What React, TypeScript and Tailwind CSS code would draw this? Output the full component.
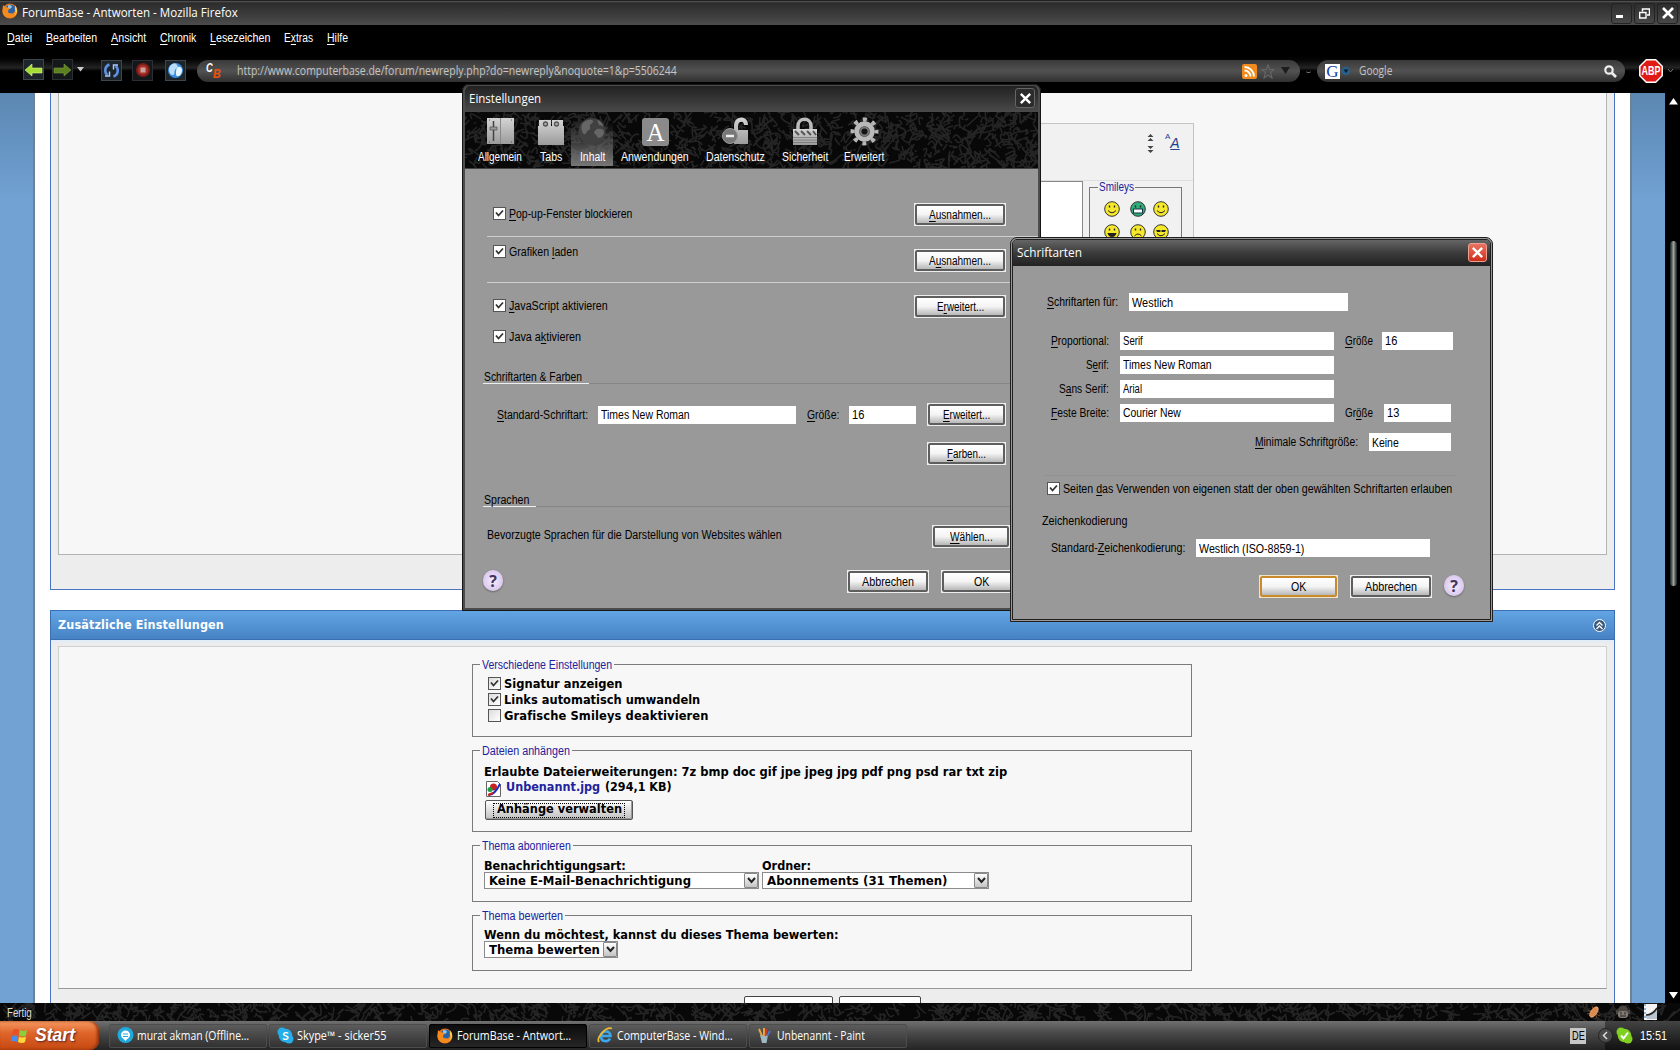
import { useLayoutEffect, useRef, useState } from "react";
import type { ReactNode } from "react";

// Text with an optional "_" in front of the access key. With w given, long
// text is condensed and short text is tracked out so it is exactly that wide.
function Txt({ children, w, className = "" }: { children: string; w?: number; className?: string }) {
  const ref = useRef<HTMLSpanElement>(null);
  const [natural, setNatural] = useState(0);
  const plain = children.replace("_", "");

  useLayoutEffect(() => {
    if (ref.current) setNatural(ref.current.offsetWidth);
  }, []);

  const key = children.indexOf("_");
  const condensed = w && natural > w;
  const spaced = w && natural && natural < w;

  return (
    <span className={`inline-block shrink-0 whitespace-pre ${className}`} style={{ width: w }}>
      <span
        ref={ref}
        className="inline-block origin-left"
        style={{
          transform: condensed ? `scaleX(${w / natural})` : undefined,
          letterSpacing: spaced ? (w - natural) / plain.length : undefined,
        }}
      >
        {key < 0 ? (
          children
        ) : (
          <>
            {children.slice(0, key)}
            <span className="underline underline-offset-2">{children[key + 1]}</span>
            {children.slice(key + 2)}
          </>
        )}
      </span>
    </span>
  );
}

function Texture({ seed, width, height }: { seed: number; width: number; height: number }) {
  let s = seed;
  const rnd = () => {
    s = (s * 16807) % 2147483647;
    return s / 2147483647;
  };
  const strokes = Array.from({ length: Math.round((width * height) / 38) }, () => {
    const x = rnd() * width;
    const y = rnd() * height;
    const d = () => Math.round((rnd() - 0.5) * 22);
    return `M${Math.round(x)} ${Math.round(y)}q${d()} ${d()} ${d()} ${d()}`;
  });
  return (
    <svg className="absolute inset-0 h-full w-full" viewBox={`0 0 ${width} ${height}`} preserveAspectRatio="none">
      <rect width={width} height={height} fill="#080808" />
      <path d={strokes.join("")} fill="none" stroke="#2c2c2c" strokeWidth="1.6" opacity=".8" />
    </svg>
  );
}

function Firefox({ size = 16 }: { size?: number }) {
  return (
    <svg width={size} height={size} viewBox="0 0 16 16" className="shrink-0">
      <circle cx="8" cy="8" r="7.500" fill="#e8731a" />
      <circle cx="8.600" cy="6.600" r="5.200" fill="#2a62a8" />
      <path d="M6 2.500c2-1 3.600 0 4 1.500l-2 2-2-.5z" fill="#8cc8ee" />
      <path d="M1 2l2 2 3 .5 2 1-2 2 .5 2.500 4 .5c2-.8 3-2.500 2.500-5.500l1.500 1c1 4-1.500 8.500-6 9C3 15.500 0 11.500.500 7z" fill="#f58a1d" />
      <path d="M13 2.500c3 3 2.500 8-.5 10.500 1.500-3 1.500-5 .3-7z" fill="#ffd34d" />
    </svg>
  );
}

function Cross({ size = 14 }: { size?: number }) {
  return (
    <svg width={size} height={size} viewBox="0 0 14 14">
      <path d="M2 2l10 10M12 2L2 12" stroke="#fff" strokeWidth="2.600" fill="none" />
    </svg>
  );
}

function TitleBar() {
  return (
    <div className="flex h-[25px] shrink-0 items-center border-t border-[#222] bg-linear-to-b from-[#5a5a5a] via-[#2c2c2c] via-8% to-[#4b4b4b] pl-[2px] font-['Open_Sans',sans-serif] text-[12px] font-medium text-white">
      <div className="-mt-[4px]">
        <Firefox />
      </div>
      <Txt w={216} className="ml-1">ForumBase - Antworten - Mozilla Firefox</Txt>
      <div className="mr-[2px] ml-auto flex gap-[2px]">
        <div className="flex h-[21px] w-[21px] items-end rounded-[3px] border border-[#222] pb-[5px] pl-1">
          <div className="h-[3px] w-[7px] bg-white" />
        </div>
        <div className="flex h-[21px] w-[21px] items-center justify-center rounded-[3px] border border-[#222]">
          <svg width="11" height="11" viewBox="0 0 11 11" fill="none" stroke="#fff">
            <path d="M3.500 3.500V1h7v6H8" strokeWidth="1.500" />
            <path d="M.7 4.500h6.300v5.500H.7z" strokeWidth="1.400" />
          </svg>
        </div>
        <div className="flex h-[21px] w-[21px] items-center justify-center rounded-[3px] border border-[#222]">
          <Cross />
        </div>
      </div>
    </div>
  );
}

const menu: [string, number, number][] = [
  ["_Datei", 7, 25],
  ["_Bearbeiten", 46, 51],
  ["_Ansicht", 111, 35],
  ["_Chronik", 160, 36],
  ["_Lesezeichen", 210, 60],
  ["E_xtras", 284, 29],
  ["_Hilfe", 327, 21],
];

function MenuBar() {
  return (
    <div className="flex h-[26px] shrink-0 items-center bg-black text-[12px] text-white">
      {menu.map(([label, x, w], i) => (
        <div
          key={label}
          className="shrink-0"
          style={{ marginLeft: i ? x - menu[i - 1][1] - menu[i - 1][2] : x, width: w }}
        >
          <Txt w={w}>{label}</Txt>
        </div>
      ))}
    </div>
  );
}

function NavButton({ children, dim }: { children: ReactNode; dim?: boolean }) {
  return (
    <div
      className={`flex h-[21px] w-[21px] shrink-0 items-center justify-center border ${dim ? "border-[#2b2f33] bg-[#15181a]" : "border-[#3d464c] bg-[#1d252b]"}`}
    >
      {children}
    </div>
  );
}

function NavBar() {
  const pill =
    "flex h-[22px] shrink-0 items-center rounded-full bg-linear-to-b from-[#3a3a3a] via-[#525252] to-[#303030]";
  return (
    <div className="flex h-[42px] shrink-0 items-center bg-linear-to-b from-black from-5% via-[#242424] via-40% to-black to-52% pb-[2px] font-['Open_Sans',sans-serif] text-[12px] text-[#c4c4c4]">
      <div className="mb-[3px] ml-[23px] flex items-center">
        <NavButton>
          <svg width="19" height="14" viewBox="0 0 19 14">
            <path d="M1 7l7-6v4h10v5H8v3z" fill="#a4dc35" stroke="#d9f78a" strokeWidth=".6" />
          </svg>
        </NavButton>
        <div className="ml-2">
          <NavButton dim>
            <svg width="19" height="14" viewBox="0 0 19 14">
              <path d="M18 7l-7-6v4H1v5h10v3z" fill="#5c8020" stroke="#7c9a3e" strokeWidth=".6" />
            </svg>
          </NavButton>
        </div>
        <svg width="7" height="5" className="ml-1">
          <path d="M0 0h7L3.500 4.500z" fill="#ccc" />
        </svg>
      </div>
      <div className="mb-[2px] ml-[17px] flex items-center">
        <NavButton>
          <svg width="17" height="17" viewBox="0 0 17 17" fill="none" stroke="#5e8fe0" strokeWidth="2.600">
            <path d="M6.500 2.500C1.500 4 1 10.500 4.500 13M10.500 14.500c5-1.500 5.500-8 2-10.500" />
            <path d="M2 14h4.500V9.500M15 3h-4.500v4.500" strokeWidth="1.500" stroke="#a9c8ff" />
          </svg>
        </NavButton>
        <div className="ml-[10px]">
          <NavButton dim>
            <svg width="16" height="16" viewBox="0 0 16 16">
              <circle cx="8" cy="8" r="7" fill="#7d1d18" />
              <circle cx="8" cy="8" r="5" fill="#a93228" />
              <rect x="5.500" y="5.500" width="5" height="5" fill="#c9a19d" />
            </svg>
          </NavButton>
        </div>
        <div className="ml-3">
          <NavButton>
            <svg width="17" height="17" viewBox="0 0 17 17">
              <circle cx="8.500" cy="8.500" r="7.500" fill="#3b8fe0" />
              <path d="M2 8C2 2 8 0 10 3s-1 3-2 5 0 5-2 5-4-2-4-5z" fill="#b9defa" />
              <path d="M11 5c4-1 5 4 3 7s-5 3-5 0 0-6 2-7z" fill="#e6f5ff" />
            </svg>
          </NavButton>
        </div>
      </div>
      <div className={`${pill} ml-[11px] w-[1103px]`}>
        <div className="ml-[9px] flex h-[18px] w-4 items-start font-['Liberation_Sans',sans-serif] text-[12px] leading-[12px] font-bold italic">
          <Txt w={7} className="text-white">C</Txt>
          <Txt w={8} className="mt-[6px] text-[#f3500d]">B</Txt>
        </div>
        <Txt w={440} className="ml-[15px]">
          http://www.computerbase.de/forum/newreply.php?do=newreply&noquote=1&p=5506244
        </Txt>
        <svg width="15" height="15" viewBox="0 0 15 15" className="ml-auto">
          <rect width="15" height="15" rx="2" fill="#f08c1e" />
          <circle cx="4" cy="11.500" r="1.500" fill="#fff" />
          <path d="M2.500 6.500a6 6 0 016 6M2.500 3a9.500 9.500 0 019.500 9.500" stroke="#fff" strokeWidth="1.800" fill="none" />
        </svg>
        <svg width="14" height="15" viewBox="0 0 14 15" className="ml-1">
          <path d="M7 1l1.700 4.500H13L9.600 8.500 11 14l-4-3-4 3 1.400-5.500L1 5.500h4.300z" fill="none" stroke="#666" strokeWidth="1.100" />
        </svg>
        <svg width="9" height="8" className="mr-[10px] ml-[6px]">
          <path d="M0 0h9L4.500 7z" fill="#1d1d1d" />
        </svg>
      </div>
      <div className="mx-[6px] h-1 w-[5px] rounded-full border-b border-[#777]" />
      <div className={`${pill} w-[308px]`}>
        <div className="ml-2 flex h-[15px] w-[15px] items-center justify-center bg-white font-['Liberation_Serif',serif] text-[17px] leading-none text-[#1a3da8]">
          G
        </div>
        <svg width="8" height="8" viewBox="0 0 8 8" className="ml-[2px]">
          <circle cx="4" cy="4" r="4" fill="#26628f" />
          <path d="M1.500 2.500h5L4 6z" fill="#0a1c2c" />
        </svg>
        <Txt w={33} className="ml-[9px]">Google</Txt>
        <svg width="13" height="13" viewBox="0 0 13 13" fill="none" stroke="#eee" className="mr-2 ml-auto">
          <circle cx="5" cy="5" r="3.700" strokeWidth="2.200" />
          <path d="M8 8l4 4" strokeWidth="2.600" />
        </svg>
      </div>
      <svg width="24" height="24" viewBox="0 0 24 24" className="ml-[14px] shrink-0">
        <path d="M7.300.800h9.400l6.500 6.500v9.400l-6.500 6.500H7.300L.800 16.700V7.300z" fill="#e01a14" stroke="#fff" strokeWidth="1.500" />
        <text x="12" y="16.200" fontSize="12" fontWeight="bold" fill="#fff" textAnchor="middle" textLength="19" lengthAdjust="spacingAndGlyphs" fontFamily="Liberation Sans">
          ABP
        </text>
      </svg>
      <svg width="5" height="4" className="ml-[5px]">
        <path d="M0 0l2.500 3L5 0" stroke="#777" fill="none" />
      </svg>
    </div>
  );
}

function Check({ on, web }: { on?: boolean; web?: boolean }) {
  return (
    <div
      className={`flex h-[13px] w-[13px] shrink-0 items-center justify-center border border-[#555] ${web ? "bg-linear-to-br from-[#dcdcdc] to-white" : "bg-white"}`}
    >
      {on && (
        <svg width="9" height="9" viewBox="0 0 9 9">
          <path d="M1 3.500l2.500 3L8 1.500" stroke="#333" strokeWidth="1.800" fill="none" />
        </svg>
      )}
    </div>
  );
}

function CheckRow({ label, w, on = true }: { label: string; w: number; on?: boolean }) {
  return (
    <div className="flex h-[13px] items-center">
      <Check on={on} />
      <Txt w={w} className="ml-[3px]">{label}</Txt>
    </div>
  );
}

function Button({ label, w, className = "", primary }: { label: string; w: number; className?: string; primary?: boolean }) {
  return (
    <div
      className={`flex h-[23px] shrink-0 border bg-white ${primary ? "border-[#efe3c8]" : "border-[#eee]"} ${className}`}
    >
      <div
        className={`flex flex-1 items-center justify-center rounded-[2px] border-2 bg-linear-to-b from-white via-[#f4f4f4] via-50% to-[#b8b8b8] ${primary ? "border-[#c98a2b]" : "border-[#5e5e5e]"}`}
      >
        <Txt w={w} className="mt-px">{label}</Txt>
      </div>
    </div>
  );
}

function Input({ value, w, className = "" }: { value: string; w: number; className?: string }) {
  return (
    <div className={`flex h-[18px] shrink-0 items-center bg-white pl-[3px] ${className}`}>
      <Txt w={w}>{value}</Txt>
    </div>
  );
}

function Help({ className = "" }: { className?: string }) {
  return (
    <div
      className={`flex h-[21px] w-5 items-center justify-center rounded-full bg-radial from-[#f6eeff] to-[#cdb8e6] font-['Open_Sans',sans-serif] text-[16px] font-bold text-[#43345c] shadow-[0_1px_2px_#666] ${className}`}
    >
      ?
    </div>
  );
}

function Heading({ label, w, className }: { label: string; w: number; className: string }) {
  return (
    <div className="ml-[18px] flex h-[14px]">
      <div className={`border-b border-[#eee] pl-[1px] leading-[15px] ${className}`}>
        <Txt w={w}>{label}</Txt>
      </div>
      <div className="flex-1 border-b border-[#858585]" />
    </div>
  );
}

const tabs: { label: string; w: number; cell: string; icon: ReactNode; active?: boolean }[] = [
  {
    label: "Allgemein", w: 44, cell: "w-[60px]",
    icon: (
      <>
        <rect x="1" y="1" width="27" height="26" fill="url(#metal)" />
        <path d="M14.500 1v26" stroke="#888" />
        <path d="M7.500 4v20" stroke="#444" strokeWidth="1.500" />
        <rect x="4" y="10" width="7" height="3" fill="#999" stroke="#444" strokeWidth=".6" />
        <path d="M3 3h1M3 25h1M25 3h1M25 25h1" stroke="#555" />
      </>
    ),
  },
  {
    label: "Tabs", w: 22, cell: "w-[41px]",
    icon: (
      <>
        <path d="M2 28V9h26v19zM3 3h12v6H3zM16 3h11v6H16z" fill="url(#metal)" />
        <circle cx="9.500" cy="7" r="2" fill="#aaa" stroke="#555" strokeWidth="1.300" />
        <circle cx="20.500" cy="7" r="2" fill="#aaa" stroke="#555" strokeWidth="1.300" />
      </>
    ),
  },
  {
    label: "Inhalt", w: 25, cell: "w-[42px]", active: true,
    icon: (
      <>
        <circle cx="14" cy="14.500" r="13.500" fill="#404040" />
        <path d="M4 7c4-5 10-5 11-3s-4 3-3 6-2 2-4 6-6-3-4-9zM19 12c4-1 7 0 7 3s-3 6-5 6-2-3-4-4 0-4 2-5zM19 3c4 1 6 4 6 6l-4-1z" fill="#666" />
      </>
    ),
  },
  {
    label: "Anwendungen", w: 68, cell: "w-[84px]",
    icon: (
      <>
        <rect x="1" y="1" width="27" height="28" rx="3" fill="#8a8a8a" />
        <text x="14.500" y="23.500" fontSize="25" fill="#fff" textAnchor="middle" fontFamily="Liberation Serif">A</text>
      </>
    ),
  },
  {
    label: "Datenschutz", w: 59, cell: "w-[76px]",
    icon: (
      <>
        <path d="M13 9c0-11 14-11 14-1h-4c0-5-6-4-6 1v4h10v14H13z" fill="url(#metal)" />
        <circle cx="9" cy="19" r="7.500" fill="#777" stroke="#999" />
        <path d="M5 19h8" stroke="#eee" strokeWidth="2.500" />
      </>
    ),
  },
  {
    label: "Sicherheit", w: 46, cell: "w-[63px]",
    icon: (
      <>
        <path d="M8 13V9c0-9 13-9 13 0v4" fill="none" stroke="#bbb" strokeWidth="3.500" />
        <path d="M3 12h24v16H3z" fill="url(#metal)" />
        <path d="M5 14l4 4M11 14l4 4M17 14l4 4M23 14l3 4" stroke="#555" strokeWidth="2" />
        <path d="M3 20.500h24M3 23h24M3 25.500h24" stroke="#777" strokeWidth=".8" />
      </>
    ),
  },
  {
    label: "Erweitert", w: 40, cell: "w-[56px]",
    icon: (
      <>
        <circle cx="14.500" cy="14.500" r="12" fill="none" stroke="#b5b5b5" strokeWidth="4" strokeDasharray="4 5.425" strokeDashoffset="2" />
        <circle cx="14.500" cy="14.500" r="7.800" fill="#333" stroke="#b9b9b9" strokeWidth="5" />
        <circle cx="14.500" cy="14.500" r="5" fill="#777" />
        <circle cx="14.500" cy="14.500" r="3" fill="#151515" />
      </>
    ),
  },
];

function SettingsDialog() {
  return (
    <div className="absolute top-[84px] left-[462px] flex h-[527px] w-[579px] flex-col overflow-hidden rounded-t-[7px] border-[3px] border-t-2 border-[#4c4c4c] bg-[#999] text-[12px] text-black outline-1 -outline-offset-1 outline-[#161616]">
      <div className="flex h-[26px] shrink-0 items-center bg-linear-to-b from-[#222] to-[#4a4a4a] pr-[3px] pl-1 font-['Open_Sans',sans-serif] font-medium text-white">
        <Txt w={72}>Einstellungen</Txt>
        <div className="mb-[2px] ml-auto flex h-[20px] w-[20px] items-center justify-center rounded-[3px] border border-[#666] bg-[#2c2c2c]">
          <Cross size={13} />
        </div>
      </div>
      <div className="relative h-[57px] shrink-0 border-b border-[#444] text-white">
        <Texture seed={77} width={573} height={56} />
        <svg width="0" height="0" className="absolute">
          <linearGradient id="metal" x1="0" x2="0" y1="0" y2="1">
            <stop offset="0" stopColor="#d4d4d4" />
            <stop offset="1" stopColor="#9b9b9b" />
          </linearGradient>
        </svg>
        <div className="relative flex h-full pl-[5px]">
          {tabs.map((t) => (
            <div
              key={t.label}
              className={`flex h-[54px] shrink-0 flex-col items-center pt-[5px] ${t.cell} ${t.active ? "bg-linear-to-b from-transparent from-20% to-[#777]" : ""}`}
            >
              <svg width="29" height="29" viewBox="0 0 29 29" className="shrink-0">
                {t.icon}
              </svg>
              <Txt w={t.w} className="mt-1 leading-[15px]">{t.label}</Txt>
            </div>
          ))}
        </div>
      </div>
      <div className="flex flex-col pt-[34px] whitespace-nowrap">
        <div className="flex h-[23px] items-start pr-8 pl-7">
          <div className="mt-1"><CheckRow label="_Pop-up-Fenster blockieren" w={123} /></div>
          <Button label="_Ausnahmen..." w={62} className="ml-auto w-[92px]" />
        </div>
        <div className="mt-[10px] ml-[22px] h-px bg-[#cfcfcf]" />
        <div className="mt-2 flex h-[27px] items-start pr-8 pl-7">
          <CheckRow label="Grafiken _laden" w={69} />
          <Button label="A_usnahmen..." w={62} className="mt-1 ml-auto w-[92px]" />
        </div>
        <div className="mt-[10px] ml-[22px] h-px bg-[#cfcfcf]" />
        <div className="mt-3 flex h-[23px] items-start pr-8 pl-7">
          <div className="mt-1"><CheckRow label="_JavaScript aktivieren" w={99} /></div>
          <Button label="E_rweitert..." w={47} className="ml-auto w-[92px]" />
        </div>
        <div className="mt-3 mb-[27px] pl-7">
          <CheckRow label="Java a_ktivieren" w={72} />
        </div>
        <Heading label="Schriftarten & Farben" w={98} className="w-[106px]" />
        <div className="mt-[19px] flex h-[23px] items-center pl-8">
          <Txt w={91}>_Standard-Schriftart:</Txt>
          <Input value="Times New Roman" w={89} className="ml-[10px] w-[198px]" />
          <Txt w={32} className="ml-[11px]">_Größe:</Txt>
          <Input value="16" w={12} className="ml-[10px] w-[67px]" />
          <Button label="_Erweitert..." w={47} className="ml-[11px] w-[79px]" />
        </div>
        <Button label="_Farben..." w={39} className="mt-4 mr-8 w-[79px] self-end" />
        <div className="h-7" />
        <Heading label="Sprachen" w={45} className="w-[53px]" />
        <div className="mt-[18px] flex h-[23px] items-center pr-[28px] pl-[22px]">
          <Txt w={295} className="-mt-[3px]">Bevorzugte Sprachen für die Darstellung von Websites wählen</Txt>
          <Button label="_Wählen..." w={43} className="ml-auto w-[78px]" />
        </div>
        <div className="mt-[22px] flex h-[23px] items-start pl-[18px]">
          <Help />
          <Button label="Abbrechen" w={52} className="ml-[344px] w-[82px]" />
          <Button label="OK" w={15} className="ml-3 w-[80px]" />
        </div>
      </div>
    </div>
  );
}

const families = [
  { label: "_Proportional:", lw: 58, value: "Serif", vw: 20, size: "16", sizeLabel: "_Größe", box: "ml-[9px] w-[71px]" },
  { label: "S_erif:", lw: 23, value: "Times New Roman", vw: 89 },
  { label: "S_ans Serif:", lw: 50, value: "Arial", vw: 19 },
  { label: "_Feste Breite:", lw: 58, value: "Courier New", vw: 58, size: "13", sizeLabel: "Gr_öße", box: "ml-[11px] w-[67px]" },
];

function FontsDialog() {
  return (
    <div className="absolute top-[237px] left-[1010px] flex h-[385px] w-[483px] flex-col overflow-hidden rounded-t-[7px] border-[3px] border-double border-[#1f1f1f] bg-[#999] text-[12px] text-black">
      <div className="flex h-[26px] shrink-0 items-center bg-linear-to-b from-[#666] via-[#3b3b3b] to-[#222] pr-[3px] pl-1 font-['Open_Sans',sans-serif] font-medium text-white">
        <Txt w={65}>Schriftarten</Txt>
        <div className="mb-px ml-auto flex h-[19px] w-[19px] items-center justify-center rounded-[3px] border border-[#f0a090] bg-linear-to-b from-[#e87260] to-[#cf2a17]">
          <Cross size={13} />
        </div>
      </div>
      <div className="flex flex-col pt-[27px] whitespace-nowrap">
        <div className="mb-[21px] flex h-[18px] items-center">
          <Txt w={71} className="ml-[34px]">_Schriftarten für:</Txt>
          <Input value="Westlich" w={41} className="ml-[11px] w-[219px] pt-px" />
        </div>
        <div className="flex flex-col gap-[6px]">
          {families.map((f) => (
            <div key={f.label} className="flex h-[18px] items-center">
              <div className="flex w-[96px] shrink-0 justify-end">
                <Txt w={f.lw}>{f.label}</Txt>
              </div>
              <Input value={f.value} w={f.vw} className="ml-[11px] w-[214px]" />
              {f.size && (
                <>
                  <Txt w={28} className="ml-[11px]">{f.sizeLabel}</Txt>
                  <Input value={f.size} w={12} className={f.box} />
                </>
              )}
            </div>
          ))}
        </div>
        <div className="mt-[11px] flex h-[18px] items-center justify-end pr-[39px]">
          <Txt w={103}>_Minimale Schriftgröße:</Txt>
          <Input value="Keine" w={27} className="ml-[11px] w-[82px] pt-px" />
        </div>
        <div className="mt-6 mr-[34px] ml-8 h-px bg-[#909090]" />
        <div className="mt-[6px] ml-[34px]">
          <CheckRow label="Seiten _das Verwenden von eigenen statt der oben gewählten Schriftarten erlauben" w={389} />
        </div>
        <div className="mt-[19px] ml-[29px] h-[14px] leading-[14px]">
          <Txt w={85}>Zeichenkodierung</Txt>
        </div>
        <div className="mt-[11px] flex h-[18px] items-center">
          <Txt w={134} className="ml-[38px]">Standard-_Zeichenkodierung:</Txt>
          <Input value="Westlich (ISO-8859-1)" w={105} className="ml-[11px] w-[234px] pt-px" />
        </div>
        <div className="mt-[18px] flex h-[23px]">
          <Button label="OK" w={15} primary className="ml-[246px] w-[79px]" />
          <Button label="Abbrechen" w={52} className="ml-3 w-[82px]" />
          <Help className="ml-3" />
        </div>
      </div>
    </div>
  );
}

function Smiley({ kind }: { kind: number }) {
  const fill = kind === 1 ? "#2fae7c" : "#f6e92c";
  return (
    <svg width="16" height="16" viewBox="0 0 16 16">
      <circle cx="8" cy="8" r="7.300" fill={fill} stroke="#333" />
      {kind === 5 ? (
        <path d="M3 6h4.500v2H4zM8.500 6H13l-1 2H8.500z" fill="#222" />
      ) : (
        <path d="M5.500 4.500v2M10.500 4.500v2" stroke="#222" strokeWidth="1.400" />
      )}
      {kind === 1 && <rect x="3.500" y="8" width="9" height="4" fill="#fff" stroke="#134" />}
      {kind === 4 && <path d="M4.500 12q3.500-4 7 0" fill="none" stroke="#222" />}
      {kind === 3 && <path d="M3.500 9h9q-1 4-4.500 4T3.500 9z" fill="#222" />}
      {(kind === 0 || kind === 2 || kind === 5) && <path d="M4 9.500q4 4.500 8 0" fill="none" stroke="#222" />}
    </svg>
  );
}

function EditorPanel() {
  return (
    <div className="ml-[413px] flex h-[420px] w-[722px] flex-col border border-[#c4c4c4] bg-[#f1f1f1]">
      <div className="flex h-[57px] shrink-0 items-start justify-end border-b border-[#ddd] pr-[11px]">
        <svg width="7" height="19" viewBox="0 0 7 19" className="mt-[10px] mr-[11px]" fill="#444">
          <path d="M3.500 0l3 3h-6zM3.500 4l3 3h-6zM3.500 15l3-3h-6zM3.500 19l3-3h-6z" />
        </svg>
        <div className="mt-[6px] flex h-5 w-[17px] items-end font-['Liberation_Sans',sans-serif] text-[#24408e]">
          <span className="mb-[9px] text-[8px] leading-none">A</span>
          <span className="text-[14px] leading-none italic underline">A</span>
        </div>
      </div>
      <div className="flex flex-1">
        <div className="w-[610px] border-t border-r border-[#888] bg-white" />
        <fieldset className="-mt-px ml-[6px] h-[200px] w-[93px] border border-[#777] pl-[15px]">
          <legend className="-ml-[7px] h-[14px] px-[1px] leading-[14px] text-[#22229c]">
            <Txt w={35}>Smileys</Txt>
          </legend>
          <div className="-ml-px mt-[7px] grid w-[66px] grid-cols-[26px_23px_16px] gap-y-[7px]">
            {[0, 1, 2, 3, 4, 5].map((k) => (
              <Smiley key={k} kind={k} />
            ))}
          </div>
        </fieldset>
      </div>
    </div>
  );
}

function Group({ title, w, className, children }: { title: string; w: number; className: string; children: ReactNode }) {
  return (
    <fieldset className={`w-[720px] border border-[#7b7b7b] pl-[11px] text-[11.5px] font-bold ${className}`}>
      <legend className="-ml-[4px] h-[14px] px-[2px] font-['Liberation_Sans',sans-serif] text-[12px] leading-[16px] font-normal text-[#22229c]">
        <Txt w={w}>{title}</Txt>
      </legend>
      {children}
    </fieldset>
  );
}

function Select({ label, w, className }: { label: string; w: number; className: string }) {
  return (
    <div className={`flex h-[17px] items-center border border-[#8b8b8b] bg-white pl-1 text-[12px] ${className}`}>
      <Txt w={w}>{label}</Txt>
      <div className="ml-auto flex h-full w-[14px] items-center justify-center rounded-[1px] border border-[#888] bg-linear-to-b from-white to-[#c4c4c4]">
        <svg width="9" height="7" viewBox="0 0 9 7">
          <path d="M1 1l3.500 4L8 1" fill="none" stroke="#222" strokeWidth="2" />
        </svg>
      </div>
    </div>
  );
}

const options: [string, number, boolean][] = [
  ["Signatur anzeigen", 118, true],
  ["Links automatisch umwandeln", 196, true],
  ["Grafische Smileys deaktivieren", 204, false],
];

function ForumPage() {
  return (
    <div className="flex min-w-0 flex-1 flex-col bg-white px-[15px] font-['DejaVu_Sans',sans-serif] text-black">
      <div className="h-[497px] shrink-0 border border-t-0 border-[#4a74c0] bg-[#ededed] px-[7px]">
        <div className="h-[462px] border border-t-0 border-[#b4b4b4] bg-[#f7f7f7] pt-[30px] font-['Liberation_Sans',sans-serif] text-[12px]">
          <EditorPanel />
        </div>
      </div>
      <div className="mt-5 flex h-[30px] shrink-0 items-center border border-[#3a6fb4] bg-linear-to-b from-[#62a4e4] to-[#4783c4] pr-[8px] pl-[7px] font-['DejaVu_Sans_Condensed','DejaVu_Sans',sans-serif] text-[12.5px] font-bold text-white">
        <Txt w={166} className="mt-px">Zusätzliche Einstellungen</Txt>
        <svg width="13" height="13" viewBox="0 0 13 13" className="ml-auto" fill="none">
          <circle cx="6.500" cy="6.500" r="6" fill="#39597e" stroke="#fff" />
          <path d="M3.500 6.500l3-3 3 3M3.500 10l3-3 3 3" stroke="#fff" strokeWidth="1.300" />
        </svg>
      </div>
      <div className="flex h-[363px] shrink-0 flex-col border-x border-[#4a74c0] bg-[#ededed]">
        <div className="mb-[3px] h-[3px] shrink-0 bg-[#e4edf6]" />
        <div className="mx-[7px] h-[343px] shrink-0 border border-[#d0d0d0] border-b-[#999] bg-[#f7f7f7] pt-[10px] pl-[413px]">
          <Group title="Verschiedene Einstellungen" w={130} className="h-[80px]">
            <div className="mt-[6px] ml-[4px] flex flex-col gap-[3px]">
              {options.map(([label, w, on]) => (
                <div key={label} className="flex h-[13px] items-center">
                  <Check on={on} web />
                  <Txt w={w} className="mt-[2px] ml-[3px]">{label}</Txt>
                </div>
              ))}
            </div>
          </Group>
          <Group title="Dateien anhängen" w={88} className="mt-[6px] h-[89px]">
            <div className="mt-[7px] h-4 leading-4">
              <Txt w={523}>Erlaubte Dateierweiterungen: 7z bmp doc gif jpe jpeg jpg pdf png psd rar txt zip</Txt>
            </div>
            <div className="flex h-4 items-center">
              <svg width="16" height="16" viewBox="0 0 16 16" className="mt-[2px] ml-[2px]">
                <path d="M.500.500h11l3 3v12H.500z" fill="#fff" stroke="#666" />
                <circle cx="7.500" cy="6" r="3.500" fill="#c9211e" />
                <circle cx="4" cy="8.500" r="2.500" fill="#16a04a" />
                <path d="M3 14c5 0 8-5 11-11" stroke="#1a2fc4" strokeWidth="2" fill="none" />
                <path d="M2 14l5-2" stroke="#c9211e" strokeWidth="2" />
              </svg>
              <Txt w={94} className="ml-1 text-[#22229c]">Unbenannt.jpg</Txt>
              <Txt w={67} className="ml-[5px]">(294,1 KB)</Txt>
            </div>
            <div className="mt-[4px] ml-[1px] flex h-5 w-[148px] items-center justify-center rounded-[2px] border border-[#555] bg-linear-to-b from-white to-[#c0c0c0] shadow-[inset_-1px_-1px_#999]">
              <div className="flex h-[15px] w-[132px] items-center justify-center border border-dotted border-black">
                <Txt w={125}>Anhänge verwalten</Txt>
              </div>
            </div>
          </Group>
          <Group title="Thema abonnieren" w={89} className="mt-[6px] h-[64px]">
            <div className="mt-[6px] flex gap-[3px]">
              <div className="flex w-[275px] flex-col">
                <Txt w={142} className="h-[14px] leading-[16px]">Benachrichtigungsart:</Txt>
                <Select label="Keine E-Mail-Benachrichtigung" w={202} className="w-[275px]" />
              </div>
              <div className="flex w-[227px] flex-col">
                <Txt w={49} className="h-[14px] leading-[16px]">Ordner:</Txt>
                <Select label="Abonnements (31 Themen)" w={181} className="w-[227px]" />
              </div>
            </div>
          </Group>
          <Group title="Thema bewerten" w={81} className="mt-[6px] h-[63px]">
            <div className="mt-[5px] h-[14px] leading-[16px]">
              <Txt w={355}>Wenn du möchtest, kannst du dieses Thema bewerten:</Txt>
            </div>
            <Select label="Thema bewerten" w={111} className="w-[134px]" />
          </Group>
        </div>
        <div className="mt-[7px] ml-[693px] flex gap-[6px]">
          <div className="h-5 w-[89px] rounded-t-[2px] border border-[#444] bg-white" />
          <div className="h-5 w-[82px] rounded-t-[2px] border border-[#444] bg-white" />
        </div>
      </div>
    </div>
  );
}

function Viewport() {
  return (
    <div className="flex h-[910px] shrink-0 overflow-hidden">
      <div className="w-[35px] shrink-0 border-r-2 border-[#6f8194] bg-linear-to-b from-[#5b87b2] to-[#72a2d4] to-12%" />
      <ForumPage />
      <div className="w-[35px] shrink-0 border-l-2 border-[#6f8194] bg-linear-to-b from-[#5b87b2] to-[#72a2d4] to-12%" />
      <div className="flex w-[15px] shrink-0 flex-col items-center bg-black pl-px">
        <svg width="9" height="7" className="mt-[5px]">
          <path d="M4.500 0L9 6.500H0z" fill="#fff" />
        </svg>
        <div className="mt-[136px] h-[345px] w-[7px] rounded-full bg-linear-to-r from-[#1a1f1f] via-[#9aa3a3] to-[#1a1f1f]" />
        <svg width="9" height="7" className="mt-auto mb-[4px]">
          <path d="M0 0h9L4.500 6.500z" fill="#fff" />
        </svg>
      </div>
    </div>
  );
}

function StatusBar() {
  return (
    <div className="relative h-[18px] shrink-0 overflow-hidden">
      <Texture seed={4242} width={1680} height={18} />
      <div className="relative flex h-full items-center pl-[7px] text-[12px] text-[#ddd]">
        <Txt w={25} className="mt-px">Fertig</Txt>
        <svg width="16" height="16" viewBox="0 0 16 16" className="ml-auto">
          <path d="M2 6l12 6M3 12l9-9M6 2l5 12M1 10l5-1" stroke="#7a4a26" />
          <ellipse cx="8" cy="8" rx="3" ry="6" transform="rotate(35 8 8)" fill="#dd8a4c" stroke="#f5c9a4" strokeWidth=".6" />
        </svg>
        <svg width="16" height="14" viewBox="0 0 16 14" className="ml-[13px]">
          <circle cx="8" cy="5.500" r="5" fill="#4a4743" />
          <path d="M1 5h3v4H1zM12 5h3v4h-3z" fill="#4a4743" />
          <rect x="3" y="6" width="10" height="7" rx="3" fill="#817b73" />
          <path d="M6 7v2.500M10 7v2.500M5 11h6" stroke="#222" />
        </svg>
        <svg width="14" height="16" viewBox="0 0 14 16" className="mr-[22px] ml-[13px]">
          <rect width="13" height="16" fill="#f3f3f3" />
          <path d="M1 11c4 1 8-1 12-7v11H3z" fill="#b8c4d0" />
          <path d="M2 11c4 0 8-2 11-7" stroke="#222" strokeWidth="1.600" fill="none" />
          <path d="M1 0v16" stroke="#2a7ac8" strokeDasharray="2 2" />
        </svg>
      </div>
    </div>
  );
}

const tasks: { label: string; w: number; icon: ReactNode; active?: boolean }[] = [
  {
    label: "murat akman (Offline…", w: 112,
    icon: (
      <svg width="17" height="17" viewBox="0 0 17 17">
        <circle cx="8.500" cy="8" r="8" fill="#22a9de" />
        <path d="M4 8a4.500 4.500 0 119 0c0 3-3 3.500-4.500 6C7 11.500 4 11 4 8z" fill="#fff" />
        <path d="M6 7h5M6 9.500h5" stroke="#22a9de" />
      </svg>
    ),
  },
  {
    label: "Skype™ - sicker55", w: 89,
    icon: (
      <svg width="17" height="17" viewBox="0 0 17 17">
        <circle cx="8.500" cy="8.500" r="6.800" fill="#25aee8" />
        <circle cx="5" cy="5" r="4.500" fill="#25aee8" />
        <circle cx="12" cy="12" r="4.500" fill="#25aee8" />
        <text x="8.500" y="13" fontSize="12" fontWeight="bold" textAnchor="middle" fill="#fff" fontFamily="Lato">S</text>
      </svg>
    ),
  },
  { label: "ForumBase - Antwort...", w: 114, icon: <Firefox />, active: true },
  {
    label: "ComputerBase - Wind…", w: 116,
    icon: (
      <svg width="17" height="17" viewBox="0 0 17 17" fill="none">
        <path d="M4 9h9.500c0-6-9-6-9.500 0s7 6.500 9 2.500" stroke="#3aa7ee" strokeWidth="2.600" />
        <path d="M2 15C-1 11 9-1 15 1.500" stroke="#f2bb2e" strokeWidth="1.800" />
      </svg>
    ),
  },
  {
    label: "Unbenannt - Paint", w: 88,
    icon: (
      <svg width="15" height="17" viewBox="0 0 15 17">
        <path d="M3 8h8l-1.500 8H5z" fill="#9fb7c0" />
        <path d="M5 9L2 2M7 9V1" stroke="#e7a43c" strokeWidth="2" />
        <path d="M8.500 9l1-7" stroke="#d23b2a" strokeWidth="1.800" />
        <path d="M10 9l3-5" stroke="#4a77d6" strokeWidth="1.800" />
      </svg>
    ),
  },
];

function Taskbar() {
  return (
    <div className="flex h-[29px] shrink-0 items-center bg-linear-to-b from-[#707070] via-[#4a4a4a] via-40% to-[#242424] font-['Open_Sans',sans-serif] text-[12px] text-white">
      <div className="flex h-full w-[99px] shrink-0 items-center rounded-r-[9px] bg-linear-to-b from-[#f59a62] via-[#e0662a] via-40% to-[#c4470f] pl-[10px] shadow-[inset_-2px_0_3px_#8d3410]">
        <svg width="19" height="18" viewBox="0 0 19 18">
          <path d="M3 3q3-2 6 0L8 8.500q-3-2-6 0z" fill="#e8502a" />
          <path d="M10 3q3 2 7 0l-1 5.500q-3 2-7 0z" fill="#8ccf3c" />
          <path d="M2 9.500q3-2 6 0L7 15q-3-2-6 0z" fill="#4a8cf0" />
          <path d="M9 9.500q3 2 7 0L15 15q-3 2-7 0z" fill="#ffd83c" />
        </svg>
        <Txt w={40} className="ml-[6px] font-['Liberation_Sans',sans-serif] text-[18px] font-bold italic [text-shadow:1px_1px_2px_#522]">
          Start
        </Txt>
      </div>
      <div className="ml-[10px] flex gap-[2px]">
        {tasks.map((t) => (
          <div
            key={t.label}
            className={`flex h-[24px] w-[158px] items-center rounded-[2px] border pl-[7px] ${t.active ? "border-black bg-linear-to-b from-[#0c0c0c] to-[#262626]" : "border-[#4d4d4d] bg-linear-to-b from-[#5c5c5c] to-[#323232]"}`}
          >
            <div className="w-[18px]">{t.icon}</div>
            <Txt w={t.w} className="ml-[2px]">{t.label}</Txt>
          </div>
        ))}
      </div>
      <div className="ml-auto flex h-4 w-4 items-center justify-center bg-[#c6c6c6] font-['Liberation_Sans',sans-serif] text-black">
        <Txt w={13}>DE</Txt>
      </div>
      <div className="ml-[19px] flex h-full w-[75px] items-center bg-linear-to-b from-[#444] to-[#111] font-['Liberation_Sans',sans-serif]">
        <svg width="15" height="15" viewBox="0 0 15 15" className="-ml-[7px]">
          <circle cx="7.500" cy="7.500" r="7" fill="#4a4a4a" stroke="#222" />
          <path d="M9 4L5.500 7.500 9 11" stroke="#ddd" strokeWidth="1.500" fill="none" />
        </svg>
        <svg width="17" height="17" viewBox="0 0 17 17" className="ml-[3px]">
          <circle cx="8.500" cy="8.500" r="6.800" fill="#7fd021" />
          <circle cx="5" cy="5" r="4.500" fill="#7fd021" />
          <circle cx="12" cy="12" r="4.500" fill="#7fd021" />
          <path d="M5 8.500l2.500 3L12 5.500" stroke="#fff" strokeWidth="2" fill="none" />
        </svg>
        <Txt w={27} className="ml-[7px]">15:51</Txt>
      </div>
    </div>
  );
}

export default function App() {
  return (
    <div className="relative flex h-[1050px] w-[1680px] flex-col overflow-hidden bg-black font-['Liberation_Sans',sans-serif]">
      <TitleBar />
      <MenuBar />
      <NavBar />
      <Viewport />
      <StatusBar />
      <Taskbar />
      <SettingsDialog />
      <FontsDialog />
    </div>
  );
}
